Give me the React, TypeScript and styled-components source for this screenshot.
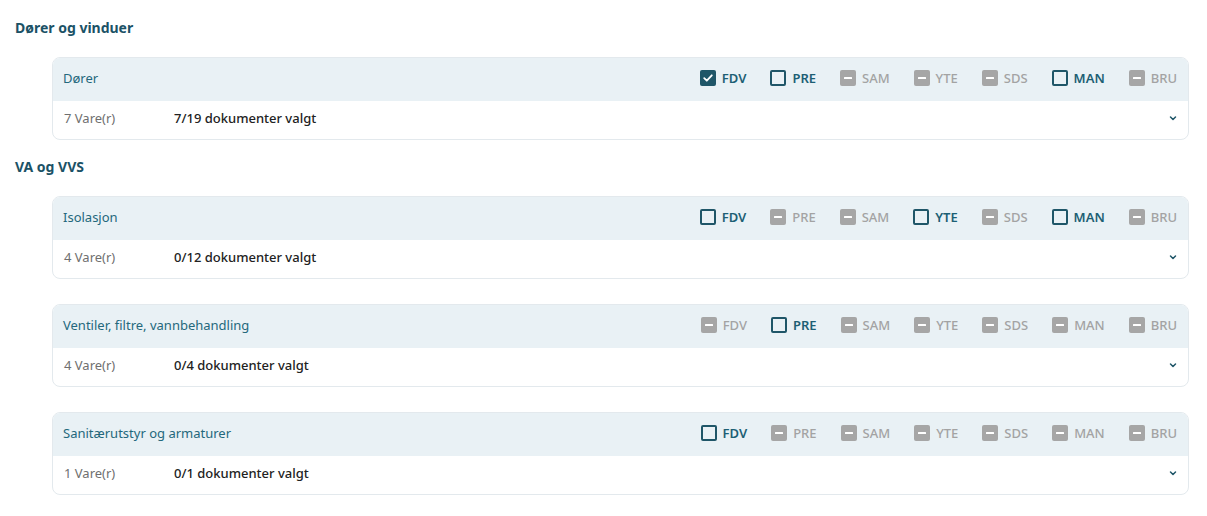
import React from 'react';
import styled, { createGlobalStyle } from 'styled-components';

type State = 'checked' | 'empty' | 'disabled';

interface Category {
  title: string;
  count: number;
  selected: string;
  docs: Record<string, State>;
}

interface Group {
  title: string;
  categories: Category[];
}

const DOC_TYPES = ['FDV', 'PRE', 'SAM', 'YTE', 'SDS', 'MAN', 'BRU'];

const groups: Group[] = [
  {
    title: 'Dører og vinduer',
    categories: [
      {
        title: 'Dører',
        count: 7,
        selected: '7/19',
        docs: { FDV: 'checked', PRE: 'empty', SAM: 'disabled', YTE: 'disabled', SDS: 'disabled', MAN: 'empty', BRU: 'disabled' },
      },
    ],
  },
  {
    title: 'VA og VVS',
    categories: [
      {
        title: 'Isolasjon',
        count: 4,
        selected: '0/12',
        docs: { FDV: 'empty', PRE: 'disabled', SAM: 'disabled', YTE: 'empty', SDS: 'disabled', MAN: 'empty', BRU: 'disabled' },
      },
      {
        title: 'Ventiler, filtre, vannbehandling',
        count: 4,
        selected: '0/4',
        docs: { FDV: 'disabled', PRE: 'empty', SAM: 'disabled', YTE: 'disabled', SDS: 'disabled', MAN: 'disabled', BRU: 'disabled' },
      },
      {
        title: 'Sanitærutstyr og armaturer',
        count: 1,
        selected: '0/1',
        docs: { FDV: 'empty', PRE: 'disabled', SAM: 'disabled', YTE: 'disabled', SDS: 'disabled', MAN: 'disabled', BRU: 'disabled' },
      },
    ],
  },
];

const GlobalStyle = createGlobalStyle`
  body {
    margin: 0;
    background: #ffffff;
    font-family: "Noto Sans", "Open Sans", sans-serif;
  }
`;

const Page = styled.div`
  padding: 18px 18px 20px 15px;
`;

const GroupTitle = styled.h2`
  margin: 0 0 19px;
  font-size: 14px;
  line-height: 20px;
  font-weight: 700;
  color: #1b5266;
`;

const GroupBlock = styled.section`
  & + & {
    margin-top: 17px;
  }
`;

const CardList = styled.div`
  display: flex;
  flex-direction: column;
  gap: 25px;
  margin-left: 37px;
`;

const Card = styled.div`
  border: 1px solid #e3e9ed;
  border-radius: 8px;
  overflow: hidden;
  background: #fff;
`;

const CardHeader = styled.div`
  box-sizing: border-box;
  display: flex;
  align-items: center;
  height: 43px;
  padding: 0 11px 4px 10px;
  background: #e9f1f5;
`;

const CardTitle = styled.div`
  flex: 1;
  font-size: 13px;
  color: #24687c;
`;

const DocList = styled.div`
  display: flex;
  align-items: center;
  gap: 24px;
`;

const DocItem = styled.label<{ $state: State }>`
  display: flex;
  align-items: center;
  gap: 6px;
  font-size: 13px;
  font-weight: ${(p) => (p.$state === 'disabled' ? 500 : 600)};
  color: ${(p) => (p.$state === 'disabled' ? '#a3a3a3' : '#1d5f74')};
`;

const Box = styled.span<{ $state: State }>`
  box-sizing: border-box;
  width: 16px;
  height: 16px;
  border-radius: 2px;
  display: flex;
  align-items: center;
  justify-content: center;
  border: ${(p) => (p.$state === 'empty' ? '2px solid #1f5668' : 'none')};
  background: ${(p) =>
    p.$state === 'checked' ? '#1f5668' : p.$state === 'disabled' ? '#a6a6a6' : 'transparent'};
`;

const CardBody = styled.div`
  box-sizing: border-box;
  display: flex;
  align-items: center;
  height: 38px;
  padding: 0 10px 4px 11px;
  font-size: 13px;
`;

const Count = styled.div`
  width: 110px;
  color: #6f6f6f;
`;

const Selected = styled.div`
  flex: 1;
  font-weight: 500;
  color: #222;
`;

const Chevron = () => (
  <svg width="10" height="10" viewBox="0 0 10 10" fill="none">
    <path d="M2.5 4 L5 6.5 L7.5 4" stroke="#1f5668" strokeWidth="1.5" strokeLinecap="round" strokeLinejoin="round" />
  </svg>
);

function DocCheckbox({ name, state }: { name: string; state: State }) {
  return (
    <DocItem $state={state}>
      <Box $state={state}>
        {state === 'checked' && (
          <svg width="12" height="12" viewBox="0 0 12 12" fill="none">
            <path d="M2.2 6.2 L4.8 8.7 L9.8 3.3" stroke="#fff" strokeWidth="1.8" strokeLinecap="round" strokeLinejoin="round" />
          </svg>
        )}
        {state === 'disabled' && (
          <svg width="10" height="10" viewBox="0 0 10 10">
            <rect x="1" y="4" width="8" height="2" rx="0.5" fill="#fff" />
          </svg>
        )}
      </Box>
      {name}
    </DocItem>
  );
}

export default function App() {
  return (
    <Page>
      <GlobalStyle />
      {groups.map((group) => (
        <GroupBlock key={group.title}>
          <GroupTitle>{group.title}</GroupTitle>
          <CardList>
            {group.categories.map((cat) => (
              <Card key={cat.title}>
                <CardHeader>
                  <CardTitle>{cat.title}</CardTitle>
                  <DocList>
                    {DOC_TYPES.map((d) => (
                      <DocCheckbox key={d} name={d} state={cat.docs[d]} />
                    ))}
                  </DocList>
                </CardHeader>
                <CardBody>
                  <Count>{cat.count} Vare(r)</Count>
                  <Selected>{cat.selected} dokumenter valgt</Selected>
                  <Chevron />
                </CardBody>
              </Card>
            ))}
          </CardList>
        </GroupBlock>
      ))}
    </Page>
  );
}
